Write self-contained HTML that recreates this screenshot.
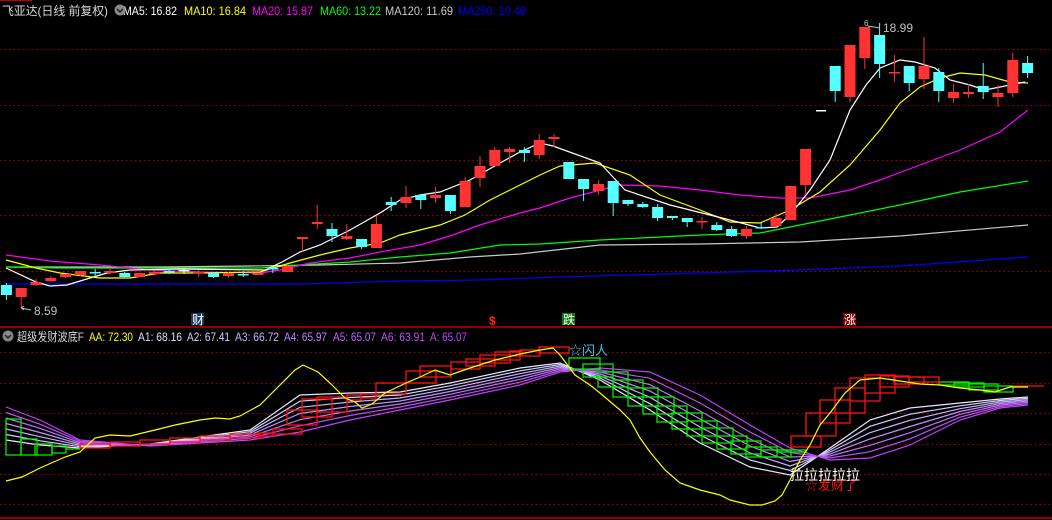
<!DOCTYPE html>
<html><head><meta charset="utf-8"><style>
body{margin:0;background:#000;width:1052px;height:520px;overflow:hidden}
svg{display:block}
text{font-family:"Liberation Sans","Noto Sans CJK SC",sans-serif}
</style></head><body>
<svg width="1052" height="520" viewBox="0 0 1052 520" xmlns="http://www.w3.org/2000/svg">
<rect width="1052" height="520" fill="#000"/>
<line x1="0" y1="0.5" x2="32" y2="0.5" stroke="#c00000"/>
<g stroke="#b00000" stroke-dasharray="1.5,3">
<line x1="0" y1="49.5" x2="1052" y2="49.5"/><line x1="0" y1="105.5" x2="1052" y2="105.5"/><line x1="0" y1="160.5" x2="1052" y2="160.5"/><line x1="0" y1="215.5" x2="1052" y2="215.5"/><line x1="0" y1="271.5" x2="1052" y2="271.5"/>
<line x1="0" y1="352.5" x2="1052" y2="352.5"/><line x1="0" y1="383.5" x2="1052" y2="383.5"/><line x1="0" y1="413.5" x2="1052" y2="413.5"/><line x1="0" y1="444.5" x2="1052" y2="444.5"/><line x1="0" y1="474.5" x2="1052" y2="474.5"/><line x1="0" y1="504.5" x2="1052" y2="504.5"/>
</g>
<line x1="0" y1="327" x2="1052" y2="327" stroke="#c00000" stroke-width="1.5"/>
<line x1="0" y1="518" x2="1052" y2="518" stroke="#c00000" stroke-width="1.5"/>
<g fill="none" stroke-width="1.2">
<polyline stroke="#0000ff" points="6,284 300,284 400,281 480,280 560,277 700,273 800,270 900,266 1028,257"/>
<polyline stroke="#c8c8c8" points="6,267 160,267 250,266 320,265 400,263 470,257 520,254 600,245 700,244 800,242 900,236 1028,225"/>
<polyline stroke="#00ff00" points="6,267 60,268 260,268 300,265 350,262 400,257 450,253 500,245 540,244 600,240 700,235 760,233 800,225 850,215 900,205 960,192 1028,181"/>
<polyline stroke="#ff00ff" points="6,255 50,261 100,265 150,270 200,272 260,273 280,270 310,263 350,258 380,252 420,245 450,236 480,225 520,213 540,208 570,198 620,185 660,186 700,190 740,195 780,198 810,198 850,190 880,180 920,165 960,150 1000,132 1028,110"/>
<polyline stroke="#ffff00" points="6,260 36,268 60,273 100,278 130,278 160,273 200,273 260,272 290,263 320,255 350,248 380,243 400,235 440,225 465,215 490,200 520,185 540,175 560,166 595,163 630,175 660,195 700,210 730,222 760,223 790,210 820,192 850,165 880,130 900,103 920,87 940,78 960,73 985,75 1010,82 1028,83"/>
<polyline stroke="#ffffff" points="6,268 36,282 50,286 67,285 90,278 107,273 130,270 180,269 265,270 282,262 300,252 320,245 350,230 380,213 400,200 420,195 440,192 470,180 500,163 520,152 540,143 553,146 600,163 625,190 670,205 730,220 760,228 777,227 790,215 810,190 830,160 850,110 866,85 880,68 900,60 915,62 935,68 950,80 970,85 985,90 1000,87 1025,82"/>
</g>
<!-- candles: wicks -->
<path fill="none" stroke="#ff3333" d="M21.2,288V308M36,279V286M50.8,276V282M65.6,274V278M80.4,271V276M110,268V274M139.6,273V277M154.4,271V275M198.8,270V277M228.4,272V278M258,273V275M287.6,265V272M302.4,237V252M317.2,205V229M346.8,224V240M376.4,216V248M406,186V208M435.6,187V203M465.2,177V207M480,156V187M494.8,147V166M509.6,147V163M539.2,134V159M554,134V147M598.4,180V195M702,217V229M746.4,226V239M776,213V227M790.8,186V220M805.6,149V195M850,45V102M864.8,27V69M894.4,55V82M924,37V89M953.6,84V103M968.4,84V98M998,85V107M1012.8,53V97"/>
<path fill="none" stroke="#54ffff" d="M6.4,283V300M95.2,269V277M124.8,272V278M169.2,269V274M213.6,272V278M243.2,271V277M272.8,266V273M332,223V242M361.6,239V249M391.2,197V211M420.8,194V209M450.4,195V214M524.4,147V162M568.8,162V179M583.6,179V201M613.2,181V216M628,200V206M642.8,202V208M657.6,204V221M672.4,216V220M687.2,218V227M716.8,222V231M731.6,226V237M761.2,223V229M835.2,66V102M879.6,23V78M909.2,66V91M938.8,68V102M983.2,63V99M1027.6,56V78"/>
<path fill="none" stroke="#fff" d="M184,268V274"/>
<g fill="#ff3333">
<rect x="15.7" y="288" width="11" height="9"/><rect x="30.5" y="282" width="11" height="3"/><rect x="45.3" y="278" width="11" height="3"/><rect x="60.1" y="274" width="11" height="3"/><rect x="74.9" y="271" width="11" height="4"/><rect x="104.5" y="271" width="11" height="2"/><rect x="134.1" y="273" width="11" height="4"/><rect x="148.9" y="272" width="11" height="2"/><rect x="193.3" y="272" width="11" height="1.5"/><rect x="222.9" y="273" width="11" height="3"/><rect x="252.5" y="273" width="11" height="2"/><rect x="282.1" y="266" width="11" height="6"/><rect x="296.9" y="237" width="11" height="2"/><rect x="311.7" y="222" width="11" height="2"/><rect x="341.3" y="236" width="11" height="3"/><rect x="370.9" y="224" width="11" height="24"/><rect x="400.5" y="197" width="11" height="6"/><rect x="430.1" y="195" width="11" height="3"/><rect x="459.7" y="181" width="11" height="26"/><rect x="474.5" y="166" width="11" height="12"/><rect x="489.3" y="150" width="11" height="16"/><rect x="504.1" y="149" width="11" height="3"/><rect x="533.7" y="140" width="11" height="15"/><rect x="548.5" y="137" width="11" height="2"/><rect x="592.9" y="184" width="11" height="7"/><rect x="696.5" y="221" width="11" height="1.5"/><rect x="740.9" y="229" width="11" height="7"/><rect x="770.5" y="218" width="11" height="8"/><rect x="785.3" y="186" width="11" height="34"/><rect x="800.1" y="149" width="11" height="36"/><rect x="844.5" y="45" width="11" height="52"/><rect x="859.3" y="27" width="11" height="31"/><rect x="888.9" y="72" width="11" height="1.5"/><rect x="918.5" y="66" width="11" height="13"/><rect x="948.1" y="92" width="11" height="6"/><rect x="962.9" y="92" width="11" height="2"/><rect x="992.5" y="93" width="11" height="4"/><rect x="1007.3" y="60" width="11" height="33"/>
</g>
<g fill="#54ffff">
<rect x="0.9" y="285" width="11" height="10"/><rect x="89.7" y="272" width="11" height="1.5"/><rect x="119.3" y="273" width="11" height="4"/><rect x="163.7" y="271" width="11" height="1.5"/><rect x="208.1" y="273" width="11" height="4"/><rect x="237.7" y="274" width="11" height="1.5"/><rect x="267.3" y="268" width="11" height="1.5"/><rect x="326.5" y="229" width="11" height="7"/><rect x="356.1" y="239" width="11" height="8"/><rect x="385.7" y="202" width="11" height="3"/><rect x="415.3" y="195" width="11" height="5"/><rect x="444.9" y="195" width="11" height="16"/><rect x="518.9" y="150" width="11" height="3"/><rect x="563.3" y="162" width="11" height="17"/><rect x="578.1" y="179" width="11" height="10"/><rect x="607.7" y="181" width="11" height="22"/><rect x="622.5" y="200" width="11" height="4"/><rect x="637.3" y="204" width="11" height="3"/><rect x="652.1" y="207" width="11" height="11"/><rect x="666.9" y="216" width="11" height="2"/><rect x="681.7" y="218" width="11" height="4"/><rect x="711.3" y="225" width="11" height="5"/><rect x="726.1" y="229" width="11" height="7"/><rect x="755.7" y="227" width="11" height="1.5"/><rect x="829.7" y="66" width="11" height="25"/><rect x="874.1" y="35" width="11" height="29"/><rect x="903.7" y="66" width="11" height="17"/><rect x="933.3" y="72" width="11" height="19"/><rect x="977.7" y="86" width="11" height="6"/><rect x="1022.1" y="63" width="11" height="10"/>
</g>
<rect x="178.5" y="270" width="11" height="1.5" fill="#fff"/>
<rect x="816" y="110" width="10" height="1.5" fill="#fff"/>
<text x="34" y="315" fill="#c0c0c0" font-size="12">8.59</text>
<path d="M21,308 L31,310 M21,308 l3,-2 M21,308 l3,2" stroke="#c0c0c0" fill="none"/>
<text x="883" y="32" fill="#c0c0c0" font-size="12">18.99</text>
<text x="864" y="26" fill="#c0c0c0" font-size="8">6</text><line x1="868" y1="26" x2="880" y2="28" stroke="#c0c0c0"/>
<rect x="191" y="313" width="13" height="12" fill="#1c3c5c"/><text x="192" y="324" fill="#fff" font-size="12">财</text>
<text x="489" y="325" fill="#ff2020" font-size="12" font-weight="bold">$</text>
<rect x="562" y="313" width="13" height="12" fill="#0a7a0a"/><text x="563" y="324" fill="#fff" font-size="12">跌</text>
<rect x="843" y="313" width="13" height="12" fill="#800000"/><text x="844" y="324" fill="#fff" font-size="12">涨</text>
<g font-size="12">
<text x="2" y="15" fill="#d8d8d8" textLength="106" lengthAdjust="spacingAndGlyphs">飞亚达(日线 前复权)</text>
<text x="123" y="15" fill="#fff" textLength="54" lengthAdjust="spacingAndGlyphs">MA5: 16.82</text>
<text x="184" y="15" fill="#ffff00" textLength="62" lengthAdjust="spacingAndGlyphs">MA10: 16.84</text>
<text x="252" y="15" fill="#ff00ff" textLength="61" lengthAdjust="spacingAndGlyphs">MA20: 15.87</text>
<text x="320" y="15" fill="#00ff00" textLength="61" lengthAdjust="spacingAndGlyphs">MA60: 13.22</text>
<text x="385" y="15" fill="#c8c8c8" textLength="68" lengthAdjust="spacingAndGlyphs">MA120: 11.69</text>
<text x="458" y="15" fill="#0000ff" textLength="68" lengthAdjust="spacingAndGlyphs">MA250: 10.48</text>
<text x="17" y="341" fill="#d8d8d8" textLength="67" lengthAdjust="spacingAndGlyphs">超级发财波底F</text>
<text x="89" y="341" fill="#ffff00" textLength="44" lengthAdjust="spacingAndGlyphs">AA: 72.30</text>
<text x="138" y="341" fill="#e0e0ff" textLength="44" lengthAdjust="spacingAndGlyphs">A1: 68.16</text>
<text x="187" y="341" fill="#d0d0ff" textLength="43" lengthAdjust="spacingAndGlyphs">A2: 67.41</text>
<text x="235" y="341" fill="#c8b0ff" textLength="44" lengthAdjust="spacingAndGlyphs">A3: 66.72</text>
<text x="284" y="341" fill="#c080ff" textLength="43" lengthAdjust="spacingAndGlyphs">A4: 65.97</text>
<text x="333" y="341" fill="#c060ff" textLength="43" lengthAdjust="spacingAndGlyphs">A5: 65.07</text>
<text x="381" y="341" fill="#c050f0" textLength="44" lengthAdjust="spacingAndGlyphs">A6: 63.91</text>
<text x="430" y="341" fill="#c040ff" textLength="37" lengthAdjust="spacingAndGlyphs">A: 65.07</text>
</g>
<circle cx="120" cy="10" r="5.5" fill="#888"/><path d="M117,9 l3,3 l3,-3" stroke="#222" fill="none" stroke-width="1.5"/>
<circle cx="8" cy="336" r="5.5" fill="#888"/><path d="M5,335 l3,3 l3,-3" stroke="#222" fill="none" stroke-width="1.5"/>
<g fill="none" stroke-width="1.2">
<polyline stroke="#e8e8ff" points="6,440 40,445 80,448 150,444 250,430 300,395 350,393 400,392 450,383 520,368 560,363 600,380 650,410 700,443 750,467 790,475 830,448 870,420 910,408 960,403 1000,399 1028,397"/>
<polyline stroke="#d0d0ff" points="6,434.5 40,440.8 80,446.7 150,444.3 250,431.7 300,401.2 350,397.5 400,395 450,385.8 520,370.8 560,364.5 600,378 650,403.7 700,435 750,460 790,470.5 830,450 870,426.3 910,414.2 960,405.8 1000,400.5 1028,398.3"/>
<polyline stroke="#c8b0ff" points="6,429 40,436.7 80,445.3 150,444.7 250,433.3 300,407.3 350,402 400,398 450,388.7 520,373.7 560,366 600,376 650,397.3 700,427 750,453 790,466 830,452 870,432.7 910,420.3 960,408.7 1000,402 1028,399.7"/>
<polyline stroke="#c090ff" points="6,423.5 40,432.5 80,444 150,445 250,435 300,413.5 350,406.5 400,401 450,391.5 520,376.5 560,367.5 600,374 650,391 700,419 750,446 790,461.5 830,454 870,439 910,426.5 960,411.5 1000,403.5 1028,401"/>
<polyline stroke="#c070ff" points="6,418 40,428.3 80,442.7 150,445.3 250,436.7 300,419.7 350,411 400,404 450,394.3 520,379.3 560,369 600,372 650,384.7 700,411 750,439 790,457 830,456 870,445.3 910,432.7 960,414.3 1000,405 1028,402.3"/>
<polyline stroke="#c050f0" points="6,412.5 40,424.2 80,441.3 150,445.7 250,438.3 300,425.8 350,415.5 400,407 450,397.2 520,382.2 560,370.5 600,370 650,378.3 700,403 750,432 790,452.5 830,458 870,451.7 910,438.8 960,417.2 1000,406.5 1028,403.7"/>
<polyline stroke="#c040ff" points="6,407 40,420 80,440 150,446 250,440 300,432 350,420 400,410 450,400 520,385 560,372 600,368 650,372 700,395 750,425 790,448 830,460 870,458 910,445 960,420 1000,408 1028,405"/>
</g>
<g fill="none" stroke-width="1.3">
<g stroke="#00ee00">
<rect x="6" y="419" width="15" height="36"/><rect x="21" y="439" width="16" height="16"/><rect x="35" y="444" width="17" height="11"/><rect x="52" y="446" width="14" height="7"/><line x1="66" y1="449" x2="80" y2="449"/>
<rect x="569" y="358" width="31" height="11"/><rect x="583" y="364" width="30" height="13"/><rect x="598" y="372" width="30" height="15"/><rect x="613" y="380" width="30" height="17"/><rect x="628" y="388" width="30" height="18"/><rect x="643" y="397" width="31" height="17"/><rect x="657" y="406" width="30" height="16"/><rect x="672" y="413" width="30" height="16"/><rect x="687" y="421" width="30" height="15"/><rect x="702" y="428" width="31" height="15"/><rect x="717" y="436" width="30" height="13"/><rect x="731" y="441" width="30" height="13"/><rect x="746" y="447" width="31" height="10"/><rect x="761" y="450" width="30" height="7"/><rect x="777" y="450" width="29" height="2"/>
<rect x="939" y="382" width="30" height="3"/><rect x="954" y="383" width="30" height="4"/><rect x="969" y="384" width="29" height="6"/><rect x="984" y="386" width="29" height="6"/>
</g>
<g stroke="#ff1010">
<rect x="80" y="444" width="30" height="4"/><rect x="110" y="442" width="30" height="4"/><rect x="140" y="440" width="30" height="4"/><rect x="170" y="438" width="30" height="4"/><rect x="200" y="436" width="30" height="4"/><rect x="230" y="434" width="30" height="4"/><rect x="258" y="433" width="15" height="3"/>
<rect x="273" y="429" width="29" height="5"/><rect x="287" y="410" width="30" height="15"/><rect x="302" y="399" width="30" height="18"/><rect x="317" y="397" width="30" height="15"/><rect x="347" y="395" width="14" height="5"/><rect x="361" y="394" width="15" height="4"/><rect x="376" y="383" width="30" height="11"/><rect x="406" y="371" width="30" height="12"/><rect x="420" y="366" width="31" height="11"/><rect x="451" y="362" width="29" height="7"/><rect x="466" y="359" width="29" height="7"/><rect x="480" y="355" width="30" height="8"/><rect x="495" y="352" width="25" height="8"/><rect x="510" y="351" width="12" height="5"/><rect x="520" y="350" width="20" height="6"/><rect x="539" y="347" width="30" height="6"/>
<rect x="791" y="436" width="30" height="11"/><rect x="806" y="413" width="30" height="23"/><rect x="820" y="400" width="30" height="23"/><rect x="835" y="388" width="30" height="25"/><rect x="850" y="378" width="30" height="23"/><rect x="865" y="375" width="30" height="18"/><rect x="880" y="376" width="29" height="11"/><rect x="894" y="377" width="30" height="7"/><rect x="909" y="377" width="30" height="5"/><line x1="1013" y1="386" x2="1044" y2="386"/>
</g>
<polyline stroke="#ffff00" stroke-width="1.2" points="6,481 22,477 40,468 65,457 80,452 95,438 110,435 130,436 155,430 175,425 200,420 215,418 230,419 240,416 260,405 280,385 295,370 303,365 318,372 330,383 345,398 355,402 362,408 372,404 385,393 406,383 420,377 435,370 450,375 470,368 495,360 520,354 540,350 553,348 560,355 575,375 590,385 600,393 620,410 630,420 640,438 650,452 665,470 680,483 700,490 720,495 730,500 750,505 762,505 775,501 782,495 790,480 800,460 810,445 820,425 830,413 845,393 860,380 880,378 900,381 920,384 940,385 960,388 980,390 995,392 1010,387 1028,387"/>
</g>
<text x="569" y="355" fill="#40c0e0" font-size="13">☆闪人</text>
<text x="805" y="490" fill="#ff1010" font-size="13">☆发财了</text>
<text x="790" y="480" fill="#ffffff" font-size="14">拉拉拉拉拉</text>
</svg>
</body></html>
